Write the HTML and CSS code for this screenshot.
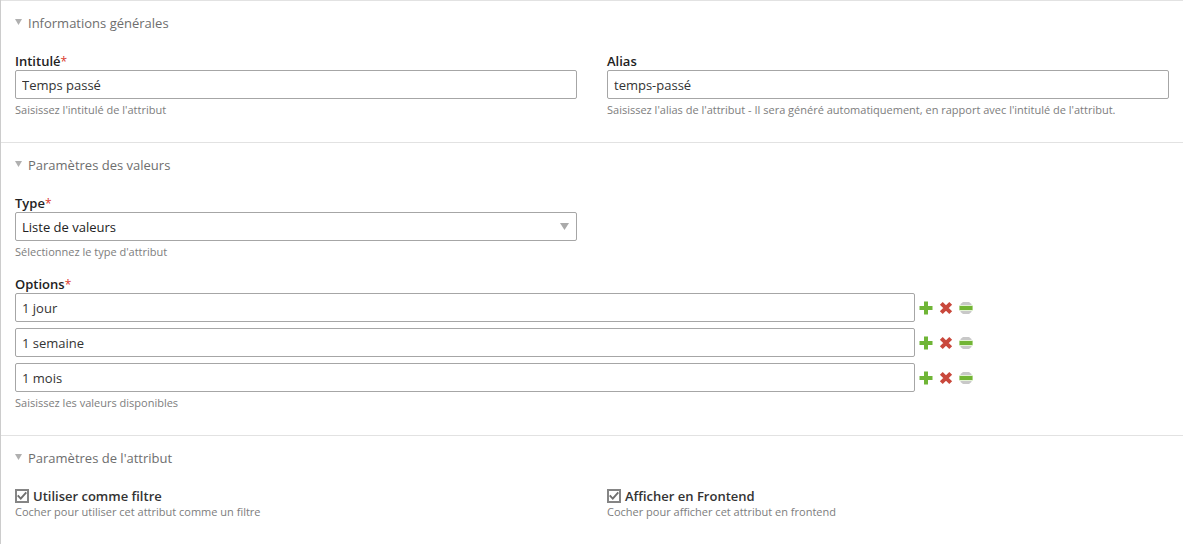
FILE: index.html
```html
<!DOCTYPE html>
<html lang="fr">
  <head>
    <meta charset="UTF-8" />
    <meta name="viewport" content="width=device-width, initial-scale=1.0" />
    <title>Attribut</title>
    <link rel="stylesheet" href="styles.css">
  </head>
  <body>
    <svg class="sprite" aria-hidden="true">
      <symbol id="icon-add" viewBox="0 0 14 14">
        <path fill="#6fb536" d="M5 .5h4V5h4.500v4H9v4.500H5V9H.5V5H5z" />
      </symbol>
      <symbol id="icon-delete" viewBox="0 0 14 14">
        <path stroke="#c9483c" stroke-width="4" d="M2.300 2.300l9.400 9.400M11.700 2.300l-9.400 9.400" />
      </symbol>
      <symbol id="icon-move" viewBox="0 0 14 14">
        <path fill="#c8c8c8" d="M4 1h6l2.500 2v8L10 13H4l-2.500-2V3z" />
        <path fill="#e3f3d5" d="M0 4h14v6H0z" />
        <path fill="#72b535" d="M.5 5h13v4H.5z" />
      </symbol>
    </svg>

    <form class="attribute">
      <section class="section">
        <h2 class="title">Informations générales</h2>
        <div class="row">
          <div class="field">
            <label class="label" for="title">Intitulé<span class="required">*</span></label>
            <input class="control" type="text" id="title" value="Temps passé">
            <p class="help">Saisissez l'intitulé de l'attribut</p>
          </div>
          <div class="field">
            <label class="label" for="alias">Alias</label>
            <input class="control" type="text" id="alias" value="temps-passé">
            <p class="help">Saisissez l'alias de l'attribut - Il sera généré automatiquement, en rapport avec l'intitulé de l'attribut.</p>
          </div>
        </div>
      </section>

      <section class="section">
        <h2 class="title">Paramètres des valeurs</h2>
        <div class="row">
          <div class="field">
            <label class="label" for="type">Type<span class="required">*</span></label>
            <div class="select">
              <select class="control" id="type">
                <option>Liste de valeurs</option>
              </select>
            </div>
            <p class="help">Sélectionnez le type d'attribut</p>
          </div>
        </div>
        <div class="field options">
          <label class="label" for="option-1">Options<span class="required">*</span></label>
          <div class="option">
            <input class="control" type="text" id="option-1" value="1 jour">
            <button class="action" type="button" aria-label="Ajouter"><svg><use href="#icon-add" /></svg></button>
            <button class="action" type="button" aria-label="Supprimer"><svg><use href="#icon-delete" /></svg></button>
            <button class="action" type="button" aria-label="Déplacer"><svg><use href="#icon-move" /></svg></button>
          </div>
          <div class="option">
            <input class="control" type="text" aria-label="Option 2" value="1 semaine">
            <button class="action" type="button" aria-label="Ajouter"><svg><use href="#icon-add" /></svg></button>
            <button class="action" type="button" aria-label="Supprimer"><svg><use href="#icon-delete" /></svg></button>
            <button class="action" type="button" aria-label="Déplacer"><svg><use href="#icon-move" /></svg></button>
          </div>
          <div class="option">
            <input class="control" type="text" aria-label="Option 3" value="1 mois">
            <button class="action" type="button" aria-label="Ajouter"><svg><use href="#icon-add" /></svg></button>
            <button class="action" type="button" aria-label="Supprimer"><svg><use href="#icon-delete" /></svg></button>
            <button class="action" type="button" aria-label="Déplacer"><svg><use href="#icon-move" /></svg></button>
          </div>
          <p class="help">Saisissez les valeurs disponibles</p>
        </div>
      </section>

      <section class="section">
        <h2 class="title">Paramètres de l'attribut</h2>
        <div class="row">
          <div class="field">
            <div class="check">
              <input type="checkbox" id="filter" checked>
              <label class="label" for="filter">Utiliser comme filtre</label>
            </div>
            <p class="help">Cocher pour utiliser cet attribut comme un filtre</p>
          </div>
          <div class="field">
            <div class="check">
              <input type="checkbox" id="frontend" checked>
              <label class="label" for="frontend">Afficher en Frontend</label>
            </div>
            <p class="help">Cocher pour afficher cet attribut en frontend</p>
          </div>
        </div>
      </section>
    </form>
  </body>
</html>
```
FILE: styles.css
```css
* {
  box-sizing: border-box;
}

body {
  margin: 0;
  background: #fff;
  color: #222;
  font-family: "Open Sans", "Noto Sans", sans-serif;
  font-size: 13px;
}

.sprite {
  display: none;
}

.attribute {
  min-height: 100vh;
  border-left: 1px solid #ccc;
}

.section {
  padding: 12px 14px 24px;
  border-top: 1px solid #e2e2e2;
}

.title {
  display: flex;
  align-items: center;
  gap: 6px;
  margin: 0 0 19px;
  color: #6e6e6e;
  font-size: 13px;
  font-weight: normal;
  line-height: 20px;
}
.title::before {
  content: "";
  width: 7px;
  height: 6px;
  margin-bottom: 2px;
  background: #b0b0b0;
  clip-path: polygon(0 0, 100% 0, 50% 100%);
}

.row {
  display: grid;
  grid-template-columns: 1fr 1fr;
  gap: 30px;
}

.label {
  display: block;
  font-weight: 600;
  line-height: 18px;
}
.required {
  color: #d9372c;
  font-size: 12px;
  font-weight: normal;
  line-height: 1;
}

.control {
  display: block;
  width: 100%;
  height: 29px;
  padding: 0 6px;
  border: 1px solid #a6a6a6;
  border-radius: 2px;
  background: #fff;
  color: #333;
  font: inherit;
}

.select {
  position: relative;
}
.select .control {
  appearance: none;
  color: #222;
}
.select::after {
  content: "";
  position: absolute;
  top: 11px;
  right: 8px;
  width: 9px;
  height: 7px;
  background: #aaa;
  clip-path: polygon(0 0, 100% 0, 50% 100%);
  pointer-events: none;
}

.help {
  margin: 3px 0 0;
  color: #7d7d7d;
  font-size: 11px;
  line-height: 16px;
}

.options {
  margin-top: 15px;
}
.option {
  display: flex;
  align-items: center;
}
.option + .option {
  margin-top: 6px;
}
.option .control {
  width: 78%;
  margin-right: 1px;
}

.action {
  display: flex;
  align-items: center;
  justify-content: center;
  width: 20px;
  height: 20px;
  padding: 0;
  border: 0;
  background: none;
  cursor: pointer;
}
.action svg {
  width: 14px;
  height: 14px;
}

.check {
  display: flex;
  align-items: center;
  gap: 4px;
}
.check input {
  appearance: none;
  width: 14px;
  height: 14px;
  margin: 0;
  border: 2px solid #858585;
  background: #fff;
}
.check input:checked::before {
  content: "";
  display: block;
  width: 10px;
  height: 10px;
  background: #707070;
  clip-path: polygon(0 50%, 15% 38%, 37% 62%, 86% 8%, 100% 20%, 38% 90%);
}
.check .label {
  color: #333;
}
.check + .help {
  margin: 0;
  line-height: 14px;
}
```
